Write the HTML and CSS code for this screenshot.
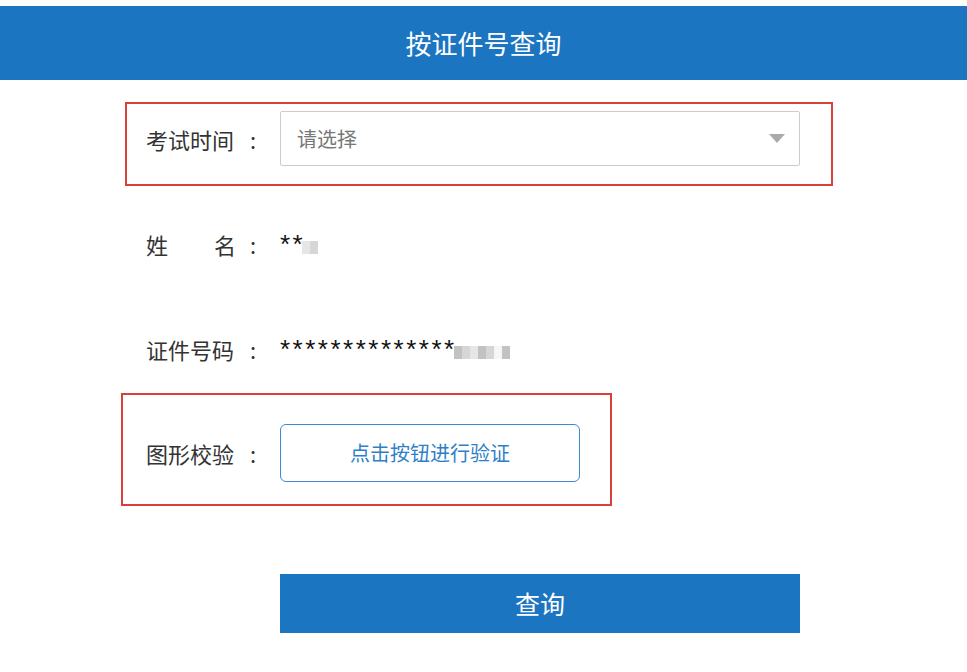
FILE: index.html
```html
<!DOCTYPE html>
<html lang="zh-CN">
<head>
	<meta charset="UTF-8">
	<title>按证件号查询</title>
	<link rel="stylesheet" href="styles.css">
</head>
<body>
	<div class="page">
		<div class="header">按证件号查询</div>
		<div class="form">
			<div class="row row-time mark">
				<div class="label"><span class="label-text">考试时间</span><span class="colon">:</span></div>
				<div class="select">
					<span class="placeholder">请选择</span>
					<span class="arrow"></span>
				</div>
			</div>
			<div class="row row-name">
				<div class="label"><span class="label-text spread">姓名</span><span class="colon">:</span></div>
				<div class="value">**<span class="blur"><i class="b3"></i><i class="b1"></i></span></div>
			</div>
			<div class="row row-id">
				<div class="label"><span class="label-text">证件号码</span><span class="colon">:</span></div>
				<div class="value">**************<span class="blur"><i class="b2"></i><i class="b1"></i><i class="b3"></i><i class="b2"></i><i class="b1"></i><i class="b4"></i><i class="b2"></i></span></div>
			</div>
			<div class="row row-check mark">
				<div class="label"><span class="label-text">图形校验</span><span class="colon">:</span></div>
				<div class="verify-btn">点击按钮进行验证</div>
			</div>
			<div class="submit">查询</div>
		</div>
	</div>
</body>
</html>
```

FILE: styles.css
```css
*{margin: 0;padding: 0;box-sizing: border-box;}
body {background: #fff;font-family: "Noto Sans CJK SC", "Noto Sans", sans-serif;color: #333;}
.page {width: 967px;padding-top: 6px;}
.header {height: 74px;line-height: 74px;background: #1b75c1;color: #fff;font-size: 26px;text-align: center;}
.form {padding-top: 22px;}
.row {display: flex;align-items: center;padding-left: 146px;}
.label {display: flex;align-items: center;width: 134px;flex: none;font-size: 22px;color: #333;}
.label-text {display: inline-block;width: 90px;}
.label-text.spread {text-align-last: justify;}
.colon {margin-left: 14px;}
.mark {border: 2px solid #d8403a;}
.row-time {width: 708px;height: 84px;margin-left: 125px;padding-left: 19px;align-items: flex-start;padding-top: 7px;}
.row-time .label {height: 55px;}
.select {display: flex;align-items: center;justify-content: space-between;width: 520px;height: 55px;border: 1px solid #ccc;border-radius: 2px;padding: 0 14px 0 16px;}
.placeholder {font-size: 20px;color: #777;}
.arrow {width: 0;height: 0;border-left: 8px solid transparent;border-right: 8px solid transparent;border-top: 9px solid #aaa;}
.row-name {height: 52px;margin-top: 32px;}
.row-id {height: 52px;margin-top: 53px;}
.value {display: flex;align-items: center;font-family: "Liberation Sans", Arial, sans-serif;font-size: 26px;letter-spacing: 2.5px;color: #111;}
.blur {display: inline-flex;margin-left: -3px;margin-top: 6px;}
.blur i {display: block;width: 8px;height: 13px;}
.blur .b1 {background: #d6d6d6;}
.blur .b2 {background: #c2c2c2;}
.blur .b3 {background: #e6e6e6;}
.blur .b4 {background: #f6f6f6;}
.row-check {width: 491px;height: 113px;margin-top: 18px;margin-left: 121px;padding-left: 23px;padding-top: 7px;}
.verify-btn {width: 300px;height: 58px;line-height: 56px;border: 1px solid #3d8ad0;border-radius: 6px;color: #2f7fc8;font-size: 20px;text-align: center;}
.submit {width: 520px;height: 59px;line-height: 59px;margin: 68px 0 0 280px;background: #1b75c1;color: #fff;font-size: 25px;text-align: center;}
```
